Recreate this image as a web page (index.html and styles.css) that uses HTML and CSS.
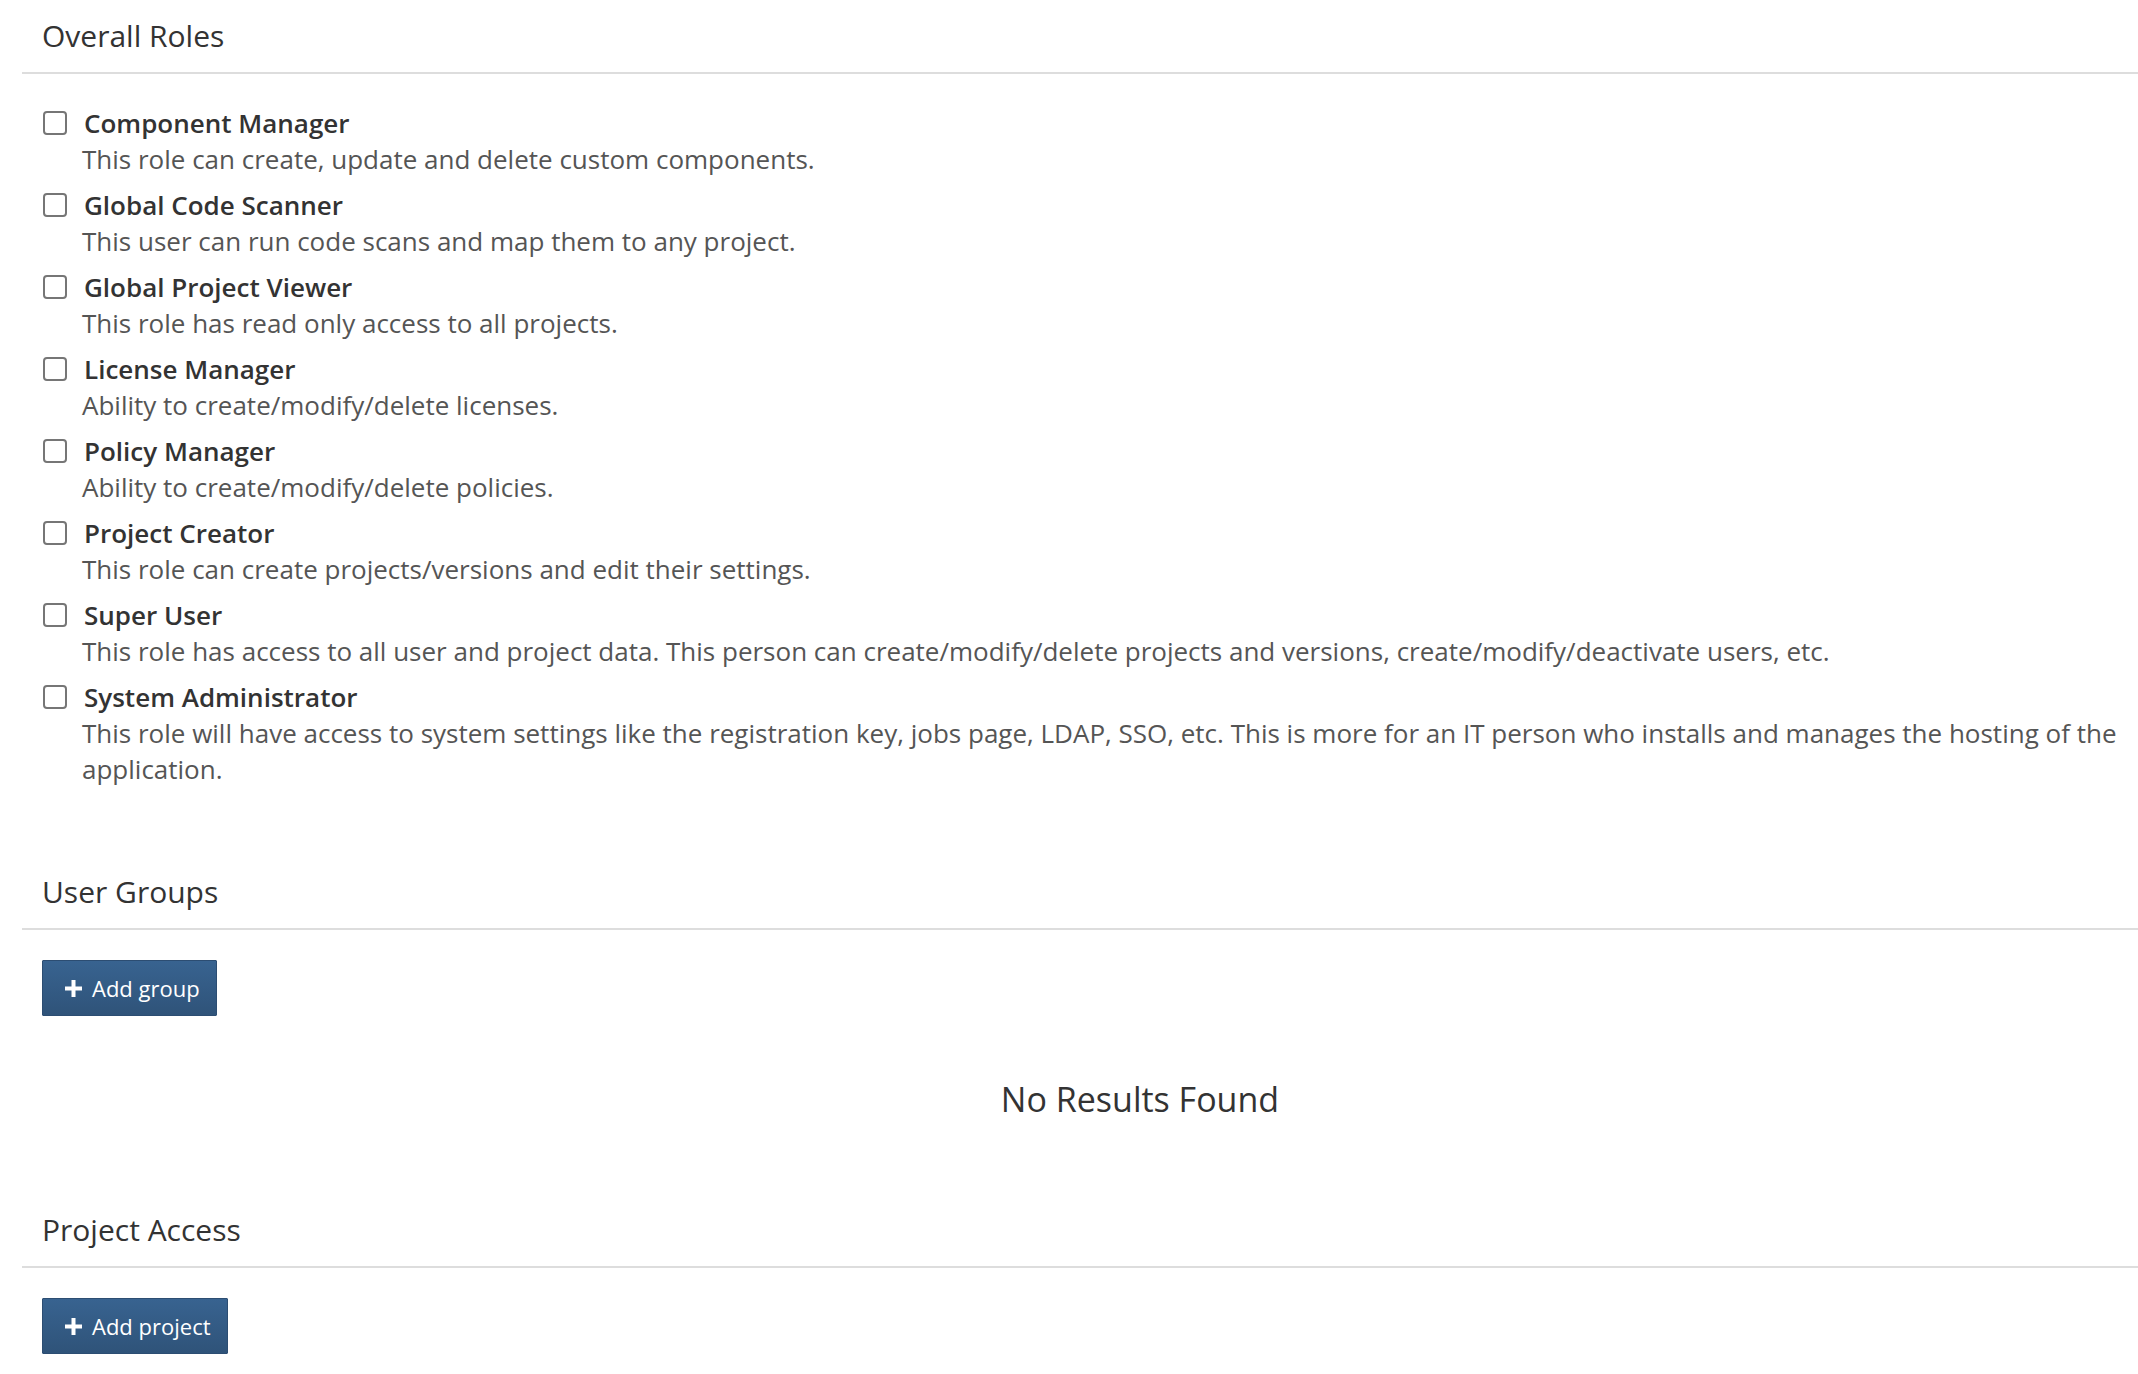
FILE: index.html
```html
<!DOCTYPE html>
<html lang="en">
<head>
  <meta charset="UTF-8">
  <title>User Permissions</title>
  <meta name="viewport" content="width=device-width, initial-scale=1">
  <link rel="stylesheet" href="styles.css">
</head>
<body>
  <div class="page">
    <section class="block">
      <h2 class="block-title">Overall Roles</h2>
      <ul class="roles">
        <li class="role">
          <input type="checkbox" class="role-check">
          <span class="role-name">Component Manager</span>
          <span class="role-desc">This role can create, update and delete custom components.</span>
        </li>
        <li class="role">
          <input type="checkbox" class="role-check">
          <span class="role-name">Global Code Scanner</span>
          <span class="role-desc">This user can run code scans and map them to any project.</span>
        </li>
        <li class="role">
          <input type="checkbox" class="role-check">
          <span class="role-name">Global Project Viewer</span>
          <span class="role-desc">This role has read only access to all projects.</span>
        </li>
        <li class="role">
          <input type="checkbox" class="role-check">
          <span class="role-name">License Manager</span>
          <span class="role-desc">Ability to create/modify/delete licenses.</span>
        </li>
        <li class="role">
          <input type="checkbox" class="role-check">
          <span class="role-name">Policy Manager</span>
          <span class="role-desc">Ability to create/modify/delete policies.</span>
        </li>
        <li class="role">
          <input type="checkbox" class="role-check">
          <span class="role-name">Project Creator</span>
          <span class="role-desc">This role can create projects/versions and edit their settings.</span>
        </li>
        <li class="role">
          <input type="checkbox" class="role-check">
          <span class="role-name">Super User</span>
          <span class="role-desc">This role has access to all user and project data. This person can create/modify/delete projects and versions, create/modify/deactivate users, etc.</span>
        </li>
        <li class="role">
          <input type="checkbox" class="role-check">
          <span class="role-name">System Administrator</span>
          <span class="role-desc">This role will have access to system settings like the registration key, jobs page, LDAP, SSO, etc. This is more for an IT person who installs and manages the hosting of the application.</span>
        </li>
      </ul>
    </section>

    <section class="block">
      <h2 class="block-title">User Groups</h2>
      <div class="block-actions">
        <button class="btn">
          <svg class="btn-icon" viewBox="0 0 19 19" width="19" height="19"><path d="M7.5 1h4v6.5H18v4h-6.5V18h-4v-6.5H1v-4h6.5z" fill="#fff"/></svg>
          Add group
        </button>
      </div>
      <p class="empty">No Results Found</p>
    </section>

    <section class="block">
      <h2 class="block-title">Project Access</h2>
      <div class="block-actions">
        <button class="btn">
          <svg class="btn-icon" viewBox="0 0 19 19" width="19" height="19"><path d="M7.5 1h4v6.5H18v4h-6.5V18h-4v-6.5H1v-4h6.5z" fill="#fff"/></svg>
          Add project
        </button>
      </div>
    </section>
  </div>
</body>
</html>
```

FILE: styles.css
```css
html, body {
  overflow: hidden;
}
body {
  margin: 0;
  font-family: 'Open Sans', 'Liberation Sans', Arial, sans-serif;
  background: #fff;
  color: #333;
}
.page {
  width: 2236px;
  margin-left: 22px;
}
.block + .block {
  margin-top: 84px;
}
.block-title {
  margin: 0;
  padding: 0 20px 15px;
  font-size: 30px;
  font-weight: 400;
  line-height: 42px;
  color: #333;
  border-bottom: 2px solid #ddd;
}
.block:first-child .block-title {
  margin-top: 15px;
}
.roles {
  list-style: none;
  margin: 31px 0 0;
  padding: 0 20px;
  display: flex;
  flex-direction: column;
  gap: 10px;
}
.role {
  display: grid;
  grid-template-columns: 40px 1fr;
  align-items: center;
}
.role-check {
  grid-row: 1;
  appearance: none;
  -webkit-appearance: none;
  margin: 0 0 0 1px;
  width: 24px;
  height: 24px;
  box-sizing: border-box;
  border: 2px solid #767676;
  border-radius: 4px;
  background: #fff;
}
.role-name {
  padding-left: 2px;
  font-size: 26px;
  font-weight: 600;
  line-height: 36px;
  color: #333;
}
.role-desc {
  grid-column: 2;
  font-size: 26px;
  line-height: 36px;
  color: #555;
}
.block-actions {
  margin-top: 30px;
  padding: 0 20px;
}
.btn {
  display: inline-flex;
  align-items: center;
  gap: 9px;
  padding: 11px 16px 11px 21px;
  border: 1px solid #2c4d72;
  border-radius: 1px;
  background: linear-gradient(#386390, #2f5379);
  color: #fff;
  font-family: inherit;
  font-size: 22px;
  line-height: 32px;
  cursor: pointer;
}
.btn-icon {
  display: block;
  flex: none;
}
.empty {
  margin: 59px 0 0;
  text-align: center;
  font-size: 34px;
  line-height: 48px;
  color: #333;
}
.block:nth-child(2) + .block {
  margin-top: 86px;
}
```
